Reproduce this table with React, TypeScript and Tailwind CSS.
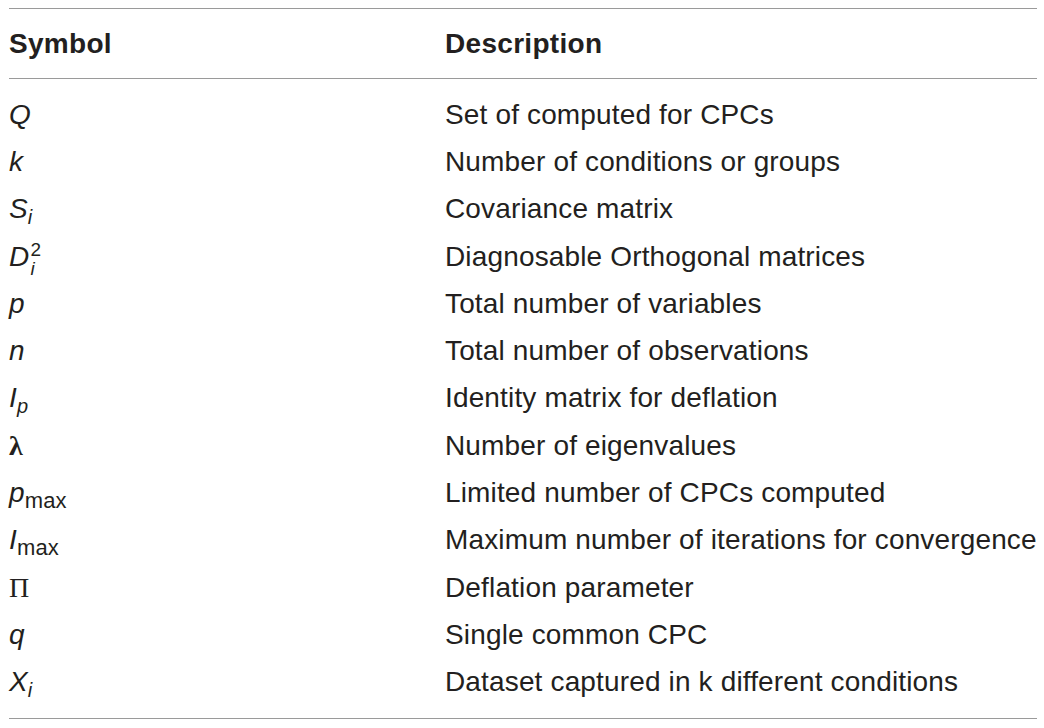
const sub = "align-[-0.28em] text-[20px] leading-none";

const rows: { sym: React.ReactNode; desc: string }[] = [
  { sym: <i>Q</i>, desc: "Set of computed for CPCs" },
  { sym: <i>k</i>, desc: "Number of conditions or groups" },
  {
    sym: (
      <>
        <i>S</i>
        <i className={sub}>i</i>
      </>
    ),
    desc: "Covariance matrix",
  },
  {
    sym: (
      <span className="inline-flex items-center">
        <i>D</i>
        <span className="ml-[1px] mt-[4px] inline-flex flex-col text-[19px] leading-[19px]">
          <span>2</span>
          <i>i</i>
        </span>
      </span>
    ),
    desc: "Diagnosable Orthogonal matrices",
  },
  { sym: <i>p</i>, desc: "Total number of variables" },
  { sym: <i>n</i>, desc: "Total number of observations" },
  {
    sym: (
      <>
        <i>I</i>
        <i className={sub}>p</i>
      </>
    ),
    desc: "Identity matrix for deflation",
  },
  {
    sym: <span className="font-['Liberation_Serif',serif] font-bold">λ</span>,
    desc: "Number of eigenvalues",
  },
  {
    sym: (
      <>
        <i>p</i>
        <span className="align-[-0.25em] text-[22px] leading-none">max</span>
      </>
    ),
    desc: "Limited number of CPCs computed",
  },
  {
    sym: (
      <>
        <i>I</i>
        <span className="align-[-0.25em] text-[22px] leading-none">max</span>
      </>
    ),
    desc: "Maximum number of iterations for convergence",
  },
  {
    sym: <span className="font-['Liberation_Serif',serif]">Π</span>,
    desc: "Deflation parameter",
  },
  { sym: <i>q</i>, desc: "Single common CPC" },
  {
    sym: (
      <>
        <i>X</i>
        <i className={sub}>i</i>
      </>
    ),
    desc: "Dataset captured in k different conditions",
  },
];

export default function App() {
  return (
    <div className="min-h-screen bg-white pt-[8px] pl-[9px] font-['Liberation_Sans',Arial,sans-serif] text-[#231f20]">
      <div className="w-[1028px]">
        <div className="flex h-[71px] items-center border-t border-b border-[#9a9a9a] text-[28px] font-bold tracking-[0.3px]">
          <div className="w-[436px]">Symbol</div>
          <div>Description</div>
        </div>
        <div className="border-b border-[#9a9a9a] py-[12px] text-[28px] tracking-[0.15px]">
          {rows.map((r, i) => (
            <div key={i} className="flex h-[47.3px] items-center whitespace-nowrap">
              <div className="w-[436px]">{r.sym}</div>
              <div>{r.desc}</div>
            </div>
          ))}
        </div>
      </div>
    </div>
  );
}
